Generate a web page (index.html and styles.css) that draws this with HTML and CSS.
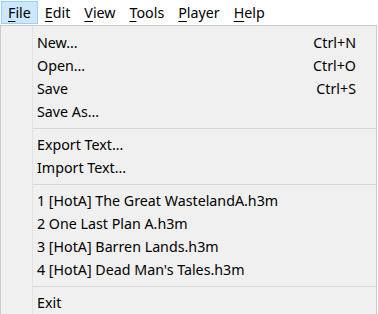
FILE: index.html
```html
<!DOCTYPE html>
<html lang="en">
<head>
  <meta charset="UTF-8">
  <title>File menu</title>
  <link rel="stylesheet" href="styles.css">
</head>
<body>
  <!-- Menu bar -->
  <div class="menubar">
    <span class="top-item open"><u>F</u>ile</span>
    <span class="top-item"><u>E</u>dit</span>
    <span class="top-item"><u>V</u>iew</span>
    <span class="top-item"><u>T</u>ools</span>
    <span class="top-item"><u>P</u>layer</span>
    <span class="top-item"><u>H</u>elp</span>
  </div>

  <!-- File dropdown -->
  <div class="popup">
    <div class="item"><span class="label">New...</span><span class="key">Ctrl+N</span></div>
    <div class="item"><span class="label">Open...</span><span class="key">Ctrl+O</span></div>
    <div class="item"><span class="label">Save</span><span class="key">Ctrl+S</span></div>
    <div class="item"><span class="label">Save As...</span></div>
    <div class="sep"></div>
    <div class="item"><span class="label">Export Text...</span></div>
    <div class="item"><span class="label">Import Text...</span></div>
    <div class="sep"></div>
    <div class="item"><span class="label">1 [HotA] The Great WastelandA.h3m</span></div>
    <div class="item"><span class="label">2 One Last Plan A.h3m</span></div>
    <div class="item"><span class="label">3 [HotA] Barren Lands.h3m</span></div>
    <div class="item"><span class="label">4 [HotA] Dead Man's Tales.h3m</span></div>
    <div class="sep"></div>
    <div class="item"><span class="label">Exit</span></div>
  </div>
</body>
</html>
```

FILE: styles.css
```css
body {
  margin: 0;
  width: 378px;
  height: 314px;
  overflow: hidden;
  background: #fff;
  font-family: "Noto Sans", sans-serif;
  font-size: 14.25px;
  color: #000;
}

.menubar {
  height: 25px;
  display: flex;
  align-items: center;
  padding-left: 1px;
  background: #fff;
}

.top-item {
  box-sizing: border-box;
  height: 23px;
  line-height: 21px;
  padding: 0 6px;
  border: 1px solid transparent;
}

.top-item u {
  text-decoration-thickness: 1px;
  text-underline-offset: 3px;
}

.top-item.open {
  background: #cce8ff;
  border-color: #99d1ff;
}

.popup {
  box-sizing: border-box;
  width: 377px;
  height: 289px;
  padding-top: 5px;
  background: #f0f0f0;
  border-top: 1px solid #cccccc;
  border-left: 1px solid #cccccc;
  border-right: 1px solid #cccccc;
  background-image: linear-gradient(#e3e3e3, #e3e3e3);
  background-size: 1px 100%;
  background-position: 31px 0;
  background-repeat: no-repeat;
}

.item {
  height: 23px;
  display: flex;
  align-items: center;
  justify-content: space-between;
  padding-left: 36px;
  padding-right: 20px;
}

.sep {
  height: 10px;
  display: flex;
  align-items: center;
  margin-left: 32px;
}

.sep::after {
  content: "";
  flex: 1;
  height: 1px;
  background: #d7d7d7;
}
```
